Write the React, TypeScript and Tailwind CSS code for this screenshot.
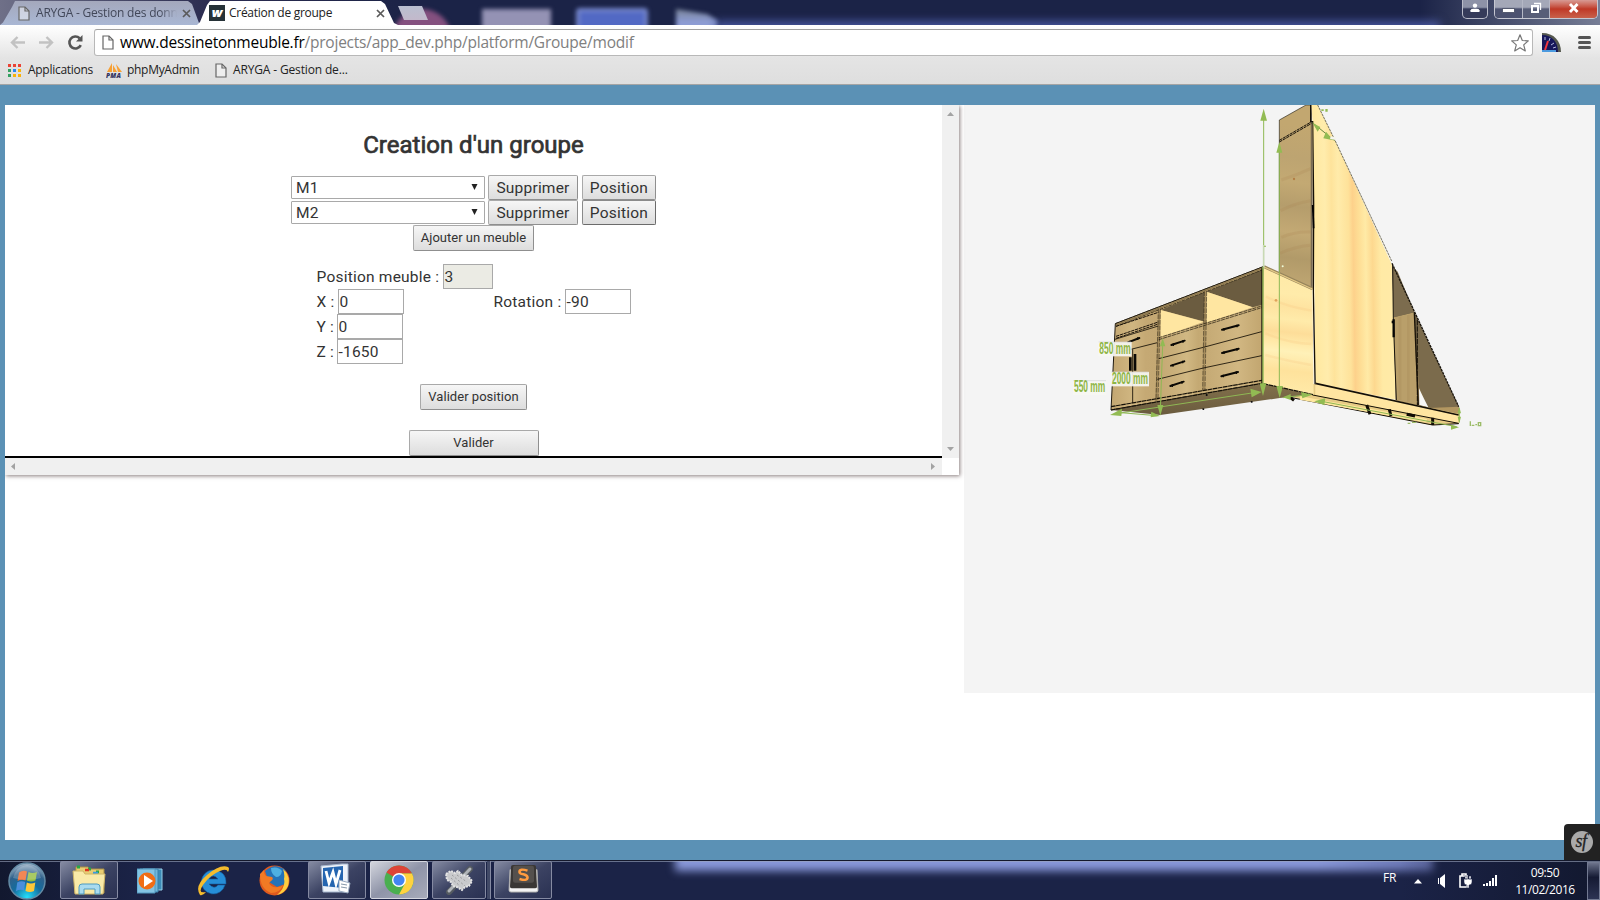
import type { ReactNode } from 'react';

const uiFont = "font-['Open_Sans','Noto_Sans',sans-serif]";

function PageIcon({ className = '' }: { className?: string }) {
  return (
    <svg className={className} width="12" height="15" viewBox="0 0 12 15" fill="none" stroke="#666" strokeWidth="1.2">
      <path d="M1 1h6l4 4v9H1z" fill="#fff" fillOpacity=".45" />
      <path d="M7 1v4h4" />
    </svg>
  );
}

function CloseIcon({ className = '' }: { className?: string }) {
  return (
    <svg className={className} width="9" height="9" viewBox="0 0 9 9" stroke="#5a5a5a" strokeWidth="1.7">
      <path d="M1 1l7 7M8 1L1 8" />
    </svg>
  );
}

function TitleBar() {
  return (
    <div className="relative flex h-[25px] shrink-0 items-start overflow-hidden bg-[#1b2347]">
      <div className="absolute inset-y-0 left-0 w-[420px] bg-linear-to-r from-[#6f7088] via-[#2b2c50] to-[#1b2347]" />
      <div className="absolute left-[392px] top-[9px] size-[60px] rounded-full bg-[#84507f] blur-[2px]" />
      <div className="absolute left-[482px] top-[9px] h-[30px] w-[69px] bg-[#9492b4] blur-[2px]" />
      <div className="absolute left-[576px] top-[8px] h-[30px] w-[72px] rounded border-[4px] border-[#7384c9] bg-[#5269c4] blur-[2px]" />
      <div className="absolute left-[672px] top-[4px] h-[30px] w-[52px] blur-[2px]">
        <div className="ml-[4px] mt-[5px] h-[26px] w-[42px] bg-linear-to-b from-[#7a8497] to-[#8d9cd4] to-50% [clip-path:polygon(0_0,75%_20%,100%_45%,100%_100%,0_100%)]" />
      </div>
      <div className="absolute left-[716px] top-[21px] h-[14px] w-[724px] bg-[#45549a] blur-[4px]" />
      <div className="absolute right-0 top-0 h-full w-[180px] bg-linear-to-r from-transparent to-[#777e96]" />
      <div className="relative mt-px flex h-6 w-[200px] items-center bg-linear-to-b from-[#a4a8bc] to-[#a9b7d4] pl-[18px] [clip-path:polygon(0_100%,3px_90%,12px_6px,15px_0,188px_0,192px_3px,199px_22px,100%_100%)]">
        <PageIcon />
        <span className={`${uiFont} ml-[6px] w-[141px] whitespace-nowrap text-[12px] leading-6 tracking-[-0.2px] text-[#42485a] [mask-image:linear-gradient(to_right,#000_88%,transparent)]`}>
          ARYGA - Gestion des donn
        </span>
        <CloseIcon className="ml-[5px] shrink-0" />
      </div>
      <div className="relative -ml-[3px] mt-px flex h-6 w-[201px] items-center bg-white pl-3 [clip-path:polygon(0_100%,3px_88%,10px_4px,13px_0,184px_0,188px_3px,197px_22px,100%_100%)]">
        <span className="flex size-4 items-center justify-center bg-[#263238] pb-[2px] font-['Open_Sans',sans-serif] text-[13px] font-extrabold italic leading-none text-white">w</span>
        <span className={`${uiFont} ml-[4px] w-[147px] whitespace-nowrap text-[12px] leading-6 tracking-[-0.28px] text-[#222]`}>Création de groupe</span>
        <CloseIcon className="shrink-0" />
      </div>
      <div className="relative mt-[6px] h-[14px] w-[30px] bg-linear-to-b from-[#b9bfd0] to-[#c3b9cb] [clip-path:polygon(0_0,24px_0,30px_100%,6px_100%)]" />
      <div className="relative ml-auto flex gap-[6px] pr-[2px]">
        <div className="flex h-[19px] w-[26px] items-center justify-center rounded-b-[5px] border-x border-b border-[#b9bcc9] bg-linear-to-b from-[#8d92a7] from-40% to-[#353b5a] to-50% pb-[2px]">
          <svg width="10" height="10" viewBox="0 0 10 10" fill="#fff"><circle cx="5" cy="2.6" r="2.2" /><path d="M.5 9V7.2Q1 5.8 3.5 5.8h3Q9 5.8 9.5 7.2V9z" /></svg>
        </div>
        <div className="flex h-[19px] w-[104px] overflow-hidden rounded-b-[5px] border-x border-b border-[#c5c7d1]">
          <div className="flex w-[28px] items-center justify-center border-r border-[#b5b8c6] bg-linear-to-b from-[#a4a8b8] from-40% to-[#4c5270] to-50%">
            <div className="mt-[2px] h-[3px] w-[11px] bg-white outline outline-[#555b70]" />
          </div>
          <div className="flex w-[27px] items-center justify-center border-r border-[#b5b8c6] bg-linear-to-b from-[#a4a8b8] from-40% to-[#585e78] to-50% pb-[2px]">
            <svg width="12" height="12" viewBox="0 0 12 12" fill="none" stroke="#fff"><path d="M4 1.5h6.500v6.500" strokeWidth="1.300" /><path d="M2 4h6v6H2z" strokeWidth="2" /></svg>
          </div>
          <div className="flex flex-1 items-center justify-center bg-linear-to-b from-[#d79a94] via-[#bf3826] via-50% to-[#c8604a] pb-[2px]">
            <svg width="12" height="10" viewBox="0 0 12 10" stroke="#fff" strokeWidth="2.800"><path d="M2 1l7.500 8M9.500 1L2 9" /></svg>
          </div>
        </div>
      </div>
    </div>
  );
}

function Arrow({ flip = false }: { flip?: boolean }) {
  return (
    <svg className={flip ? 'rotate-180' : ''} width="15" height="13" viewBox="0 0 15 13" fill="none" stroke="#c2c2c2" strokeWidth="2.400">
      <path d="M15 6.500H2M7.500 1L2 6.500l5.500 5.500" />
    </svg>
  );
}

function Toolbar() {
  return (
    <div className="flex h-[33px] shrink-0 items-start bg-linear-to-b from-white to-[#e4e4e4] pt-1">
      <div className="flex h-[27px] w-[94px] items-center pl-[10px]">
        <Arrow />
        <div className="ml-[14px]"><Arrow flip /></div>
        <svg className="ml-[13px]" width="17" height="17" viewBox="0 0 17 17">
          <path d="M13.800 11.200A6 6 0 1 1 12.600 4.200" fill="none" stroke="#555" strokeWidth="2.600" />
          <path d="M15.500 1v6.500H9z" fill="#555" />
        </svg>
      </div>
      <div className="flex h-[27px] w-[1439px] items-center rounded-[3px] border border-[#b8b8b8] border-t-[#a0a0a0] bg-white pl-[7px] pr-[3px]">
        <PageIcon />
        <span className={`${uiFont} ml-[6px] flex-1 whitespace-nowrap pb-px text-[15.500px] leading-6 tracking-[-0.230px] text-[#808080]`}>
          <span className="text-black">www.dessinetonmeuble.fr</span>/projects/app_dev.php/platform/Groupe/modif
        </span>
        <svg width="18" height="18" viewBox="0 0 18 18" fill="#fff" stroke="#777" strokeWidth="1.200" strokeLinejoin="round">
          <path d="M9 .8l2.300 5.700 6 .4-4.600 4 1.600 6L9 13.700 3.700 16.900l1.600-6-4.600-4 6-.4z" />
        </svg>
      </div>
      <svg className="ml-[9px] mt-1" width="19" height="19" viewBox="0 0 19 19">
        <path d="M0 0C12 0 19 8 19 19H0z" fill="#55584e" />
        <path d="M0 2C10 2 16 9 16 19H0z" fill="#17175a" />
        <path d="M0 17h14v2H0z" fill="#4b9be0" />
        <path d="M3 4v3M8 5L7 8M12 10l-3 2M14 14l-3 1" stroke="#b5b9df" />
        <path d="M3 17L6 8" stroke="#f2353f" strokeWidth="2" />
      </svg>
      <div className="ml-[17px] mt-[7px] flex w-[13px] flex-col gap-[2px]">
        <div className="h-[3px] rounded bg-[#555]" />
        <div className="h-[3px] rounded bg-[#555]" />
        <div className="h-[3px] rounded bg-[#555]" />
      </div>
    </div>
  );
}

const appDots = ['bg-[#ea4335]', 'bg-[#ea4335]', 'bg-[#ea4335]', 'bg-[#34a060]', 'bg-[#2a88f0]', 'bg-[#f9b20a]', 'bg-[#34a060]', 'bg-[#f9b20a]', 'bg-[#f9b20a]'];

function Bookmarks() {
  return (
    <div className={`${uiFont} flex h-[27px] shrink-0 items-center whitespace-nowrap border-b border-[#a4a4a4] bg-linear-to-b from-[#e4e4e4] to-[#dedede] pb-[2px] pl-2 text-[12px] text-[#222]`}>
      <div className="grid grid-cols-3 gap-[2px]">
        {appDots.map((c, i) => <div key={i} className={`${c} size-[3px]`} />)}
      </div>
      <span className="ml-[7px] w-[78px] tracking-[-0.280px]">Applications</span>
      <svg width="17" height="15" viewBox="0 0 17 15">
        <path d="M6 0L1 9h5zM7 2v7h4zM10 1l6 8h-4z" fill="#f7a034" />
        <text x="0" y="14.500" fontFamily="Open Sans" fontSize="6.500" fontWeight="800" fontStyle="italic" fill="#343560" textLength="15">PMA</text>
      </svg>
      <span className="ml-[4px] w-[88px] tracking-[-0.30px]">phpMyAdmin</span>
      <PageIcon />
      <span className="ml-[6px] tracking-[-0.15px]">ARYGA - Gestion de...</span>
    </div>
  );
}

function Btn({ children, className }: { children: ReactNode; className: string }) {
  return (
    <button className={`${className} flex shrink-0 items-center justify-center whitespace-nowrap rounded-[2px] border bg-linear-to-b from-[#f6f6f6] to-[#dddddd] text-[#333]`}>
      {children}
    </button>
  );
}

const btnEdge = 'border-[#a9a9a9] border-b-[#8f8f8f] border-r-[#8f8f8f]';
const btnEdgeFocused = 'border-[#8a8a8a] border-b-[#6b6b6b] border-r-[#6b6b6b]';

function FurnitureRow({ name, selected = false }: { name: string; selected?: boolean }) {
  return (
    <div className="flex h-[25px] items-center">
      <div className="flex h-[23px] w-[194px] items-center justify-between rounded-[1px] border border-[#a9a9a9] pl-1 pr-[6px]">
        <span className="pt-[2px]">{name}</span>
        <svg className="mb-[2px]" width="7" height="6" viewBox="0 0 7 6" fill="#222"><path d="M.5 0h6L3.500 6z" /></svg>
      </div>
      <Btn className={`${btnEdge} ml-[3px] h-[25px] w-[90px] pt-[2px]`}>Supprimer</Btn>
      <Btn className={`${selected ? btnEdgeFocused : btnEdge} ml-[4px] h-[25px] w-[74px] pt-[2px]`}>Position</Btn>
    </div>
  );
}

function Field({ value, className }: { value: string; className: string }) {
  return <div className={`${className} flex h-[25px] shrink-0 items-center border border-[#a9a9a9] pl-px pt-[2px]`}>{value}</div>;
}

function FormPanel() {
  return (
    <div className="relative h-[370px] w-[954px] shrink-0 bg-white shadow-[1px_1px_4px_0px_rgba(60,40,40,0.6)] [clip-path:inset(0_-8px_-8px_0)]">
      <div className="flex h-[353px]">
        <div className="flex w-[937px] flex-col items-center border-b-2 border-black font-[Roboto,sans-serif] text-[15.500px] leading-none tracking-[0.220px] text-[#333]">
          <h1 className="mt-[26px] h-[44px] whitespace-nowrap text-[24px] leading-[28px] tracking-[0px] text-[#333] [-webkit-text-stroke:0.7px_#333]">Creation d'un groupe</h1>
          <FurnitureRow name="M1" />
          <FurnitureRow name="M2" selected />
          <Btn className={`${btnEdge} h-[26px] w-[121px] pb-[2px] text-[13px] tracking-[0px]`}>Ajouter un meuble</Btn>
          <div className="mt-[13px] flex w-[314px] flex-col whitespace-nowrap">
            <div className="flex items-center">
              <span className="w-[126px] pt-[2px]">Position meuble :</span>
              <Field value="3" className="w-[50px] bg-[#ebebe4]" />
            </div>
            <div className="flex items-center">
              <span className="w-[21px] pt-[2px]">X :</span>
              <Field value="0" className="w-[66px]" />
              <span className="ml-[90px] w-[71px] pt-[2px]">Rotation :</span>
              <Field value="-90" className="w-[66px]" />
            </div>
            <div className="flex items-center">
              <span className="w-[20px] pt-[2px]">Y :</span>
              <Field value="0" className="w-[66px]" />
            </div>
            <div className="flex items-center">
              <span className="w-[20px] pt-[2px]">Z :</span>
              <Field value="-1650" className="w-[66px]" />
            </div>
          </div>
          <Btn className={`${btnEdge} mt-[20px] h-[26px] w-[107px] pb-[2px] text-[13px] tracking-[0.030px]`}>Valider position</Btn>
          <Btn className={`${btnEdge} mt-[20px] h-[26px] w-[130px] pb-[2px] text-[13px] tracking-[0.1px]`}>Valider</Btn>
        </div>
        <div className="flex w-[17px] flex-col items-center justify-between bg-[#f0f0f0] py-[7px]">
          <svg width="7" height="4" viewBox="0 0 7 4" fill="#a3a3a3"><path d="M0 4L3.500 0 7 4z" /></svg>
          <svg width="7" height="4" viewBox="0 0 7 4" fill="#a3a3a3"><path d="M0 0h7L3.500 4z" /></svg>
        </div>
      </div>
      <div className="flex h-[17px] w-[937px] items-center justify-between bg-[#f0f0f0] pl-[6px] pr-[7px]">
        <svg width="4" height="7" viewBox="0 0 4 7" fill="#a3a3a3"><path d="M4 0v7L0 3.500z" /></svg>
        <svg width="4" height="7" viewBox="0 0 4 7" fill="#a3a3a3"><path d="M0 0v7l4-3.500z" /></svg>
      </div>
    </div>
  );
}

function Handle({ x, y, l = 54 }: { x: number; y: number; l?: number }) {
  return (
    <>
      <path d={`M${x} ${y}l${l} -13`} stroke="#0b0905" strokeWidth="6" strokeLinecap="round" />
      <path d={`M${x + 6} ${y + 3}v-8M${x + l - 5} ${y - 7}v-8`} stroke="#0b0905" strokeWidth="4" />
    </>
  );
}

function Dimension({ x, y, w, children }: { x: number; y: number; w: number; children: string }) {
  return (
    <g>
      <rect x={x - 3} y={y - 35} width={w + 6} height="43" fill="#f6f6f2" fillOpacity=".92" />
      <path d={`M${x - 2} ${y - 35}h${w + 4}`} stroke="#d2d2d2" strokeWidth="2" />
      <text transform={`translate(${x} ${y}) scale(.525 1)`} fontFamily="Liberation Sans" fontSize="48" fontWeight="700" fill="#8db544">{children}</text>
    </g>
  );
}

function FurnitureDrawing() {
  return (
    <svg className="ml-[96px] block" width="430" height="335" viewBox="0 15 1290 1005" fill="none">
      <defs>
        <linearGradient id="door" x1="760" x2="1010" y1="0" y2="-4" gradientUnits="userSpaceOnUse">
          <stop offset="0" stopColor="#ffe9a2" /><stop offset=".12" stopColor="#ffecac" /><stop offset=".2" stopColor="#fee39b" />
          <stop offset=".28" stopColor="#ffebaa" /><stop offset=".4" stopColor="#fee29a" /><stop offset=".45" stopColor="#fdd18b" />
          <stop offset=".52" stopColor="#fede95" /><stop offset=".6" stopColor="#ffeaa6" /><stop offset=".68" stopColor="#fdd88f" />
          <stop offset=".78" stopColor="#ffeaa5" /><stop offset="1" stopColor="#ffeaa8" />
        </linearGradient>
        <linearGradient id="side" x1="640" x2="600" y1="500" y2="880" gradientUnits="userSpaceOnUse">
          <stop offset="0" stopColor="#ffe9a6" /><stop offset=".2" stopColor="#ffebaa" /><stop offset=".3" stopColor="#fee3a0" /><stop offset=".4" stopColor="#ffebaa" />
          <stop offset=".5" stopColor="#fddd99" /><stop offset=".58" stopColor="#ffe9a8" /><stop offset=".65" stopColor="#fff1b8" /><stop offset=".8" stopColor="#fee29c" /><stop offset="1" stopColor="#ffebaa" />
        </linearGradient>
        <linearGradient id="tower" x1="740" x2="680" y1="80" y2="560" gradientUnits="userSpaceOnUse">
          <stop offset="0" stopColor="#c2a770" /><stop offset=".2" stopColor="#bda471" /><stop offset=".35" stopColor="#c3a973" />
          <stop offset=".5" stopColor="#b59d6c" /><stop offset=".66" stopColor="#c3a974" /><stop offset=".82" stopColor="#b19a69" /><stop offset="1" stopColor="#c0a773" />
        </linearGradient>
        <linearGradient id="front" x1="160" x2="600" y1="0" y2="0" gradientUnits="userSpaceOnUse">
          <stop offset="0" stopColor="#c4a873" /><stop offset=".13" stopColor="#d0b681" /><stop offset=".22" stopColor="#c5a974" /><stop offset=".3" stopColor="#c4a873" />
          <stop offset=".42" stopColor="#cab07b" /><stop offset=".5" stopColor="#d1b883" /><stop offset=".58" stopColor="#c4a973" /><stop offset=".65" stopColor="#c6ab76" /><stop offset=".85" stopColor="#d1b782" /><stop offset="1" stopColor="#c3a771" />
        </linearGradient>
        <linearGradient id="shade" x1="0" x2="0" y1="0" y2="1">
          <stop offset="0" stopColor="#83714c" /><stop offset="1" stopColor="#6a5b3e" />
        </linearGradient>
        <linearGradient id="slope" x1="0" x2="0" y1="0" y2="1">
          <stop offset="0" stopColor="#75664a" /><stop offset=".6" stopColor="#6a5c41" /><stop offset=".75" stopColor="#9a8258" /><stop offset="1" stopColor="#6d5d40" />
        </linearGradient>
      </defs>

      {/* tall unit */}
      <path d="M658 60L738 15h16v552l-96-48z" fill="url(#tower)" stroke="#2b261a" strokeWidth="2" />
      <path d="M658 121l97-56M658 126l97-56" stroke="#1a150c" strokeWidth="3" strokeDasharray="10 2" />
      <path d="M664 240q45-14 88-34M662 332q40-22 90-30M664 412q40-18 88-16M660 460q45-20 90-24" stroke="#a77f4c" strokeOpacity=".18" strokeWidth="9" />
      <circle cx="702" cy="237" r="3.500" fill="#b27d43" />
      <path d="M754 15h19l51 104 174 380 9 400-241-50L758 68z" fill="url(#door)" />
      <path d="M773 15l51 104 172 366" stroke="#77735f" strokeWidth="3" strokeDasharray="8 2" />
      <path d="M752 15v50h6l3 250-1 260 6 310" stroke="#151006" strokeWidth="4" />
      <path d="M756 70v500" stroke="#7b6848" strokeWidth="4" />
      <path d="M758 315l3 70" stroke="#000" strokeWidth="5" />
      <path d="M757 68l67 54" stroke="#69863f" strokeWidth="3" />

      {/* sloped end of the tall unit */}
      <path d="M997 495L1196 920v50l-189-70z" fill="url(#slope)" />
      <path d="M1001 652l62-15 10 305-65-40z" fill="#b99f6a" />
      <path d="M1020 650v250M1045 645v260" stroke="#a78956" strokeWidth="8" strokeOpacity=".3" />
      <path d="M997 500l4 152 62-15-50-122z" fill="#7c6c4e" />
      <path d="M1072 660l122 260-90 4-28-65z" fill="#7b6b4c" />
      <path d="M1077 865q8 18 28 57l-27-7z" fill="#f8f8f6" />
      <path d="M1063 637l13 308" stroke="#181208" strokeWidth="4" />
      <path d="M1072 660v280" stroke="#181208" strokeWidth="3" strokeDasharray="16 3" />
      <path d="M1105 924l91-4v28z" fill="#b39761" />
      <path d="M996 490l200 430" stroke="#18130b" strokeWidth="4" strokeDasharray="8 2" />
      <path d="M998 495l2 165 9 240" stroke="#18130b" strokeWidth="3" />
      <path d="M1001 658v54M995 666h6" stroke="#060503" strokeWidth="7" />

      {/* plinth of the tall unit */}
      <path d="M690 890l70-38 437 90v29l-80 5z" fill="#e7cb85" />
      <path d="M766 850l430 92v28L766 886z" fill="#ffe5a1" />
      <path d="M766 850l430 95" stroke="#130e06" strokeWidth="5" />
      <path d="M758 885l438 85M690 892l428 83 78-4" stroke="#130e06" strokeWidth="3" />
      <path d="M720 894l380 68" stroke="#ffe79e" strokeWidth="10" />
      <path d="M920 915l10 28M988 928l5 20M1118 953v22M690 892l12 9M1040 943l25 5" stroke="#100b04" strokeWidth="9" />

      {/* low unit */}
      <path d="M166 671L610 500v350L153 930z" fill="url(#front)" stroke="#201a10" strokeWidth="3" />
      <path d="M153 930L606 850l153 34-100 10-358 51z" fill="url(#shade)" />
      <path d="M302 630l134-55v90zM440 575l166-66v105l-28 8z" fill="#6b5c40" />
      <path d="M302 630l130 35-130 47zM440 575l138 47-138 46z" fill="#ffe6a1" />
      <path d="M610 500l147 66 4 318-153-34z" fill="url(#side)" />
      <path d="M612 500l145 66" stroke="#97845b" strokeWidth="9" />
      <path d="M612 501l145 66" stroke="#e4c986" strokeWidth="4" />
      <path d="M618 590q60 30 136 42M616 700q70 30 138 32M616 765q70 18 138 30" stroke="#f9c684" strokeOpacity=".25" strokeWidth="7" />
      <circle cx="648" cy="601" r="4" fill="#e0a45c" />
      <path d="M166 671L610 500M168 679L606 510" stroke="#2b2415" strokeWidth="2.500" strokeDasharray="12 2" />
      <path d="M168 675L608 505" stroke="#8f7a50" strokeWidth="5" />
      <path d="M298 625l-9 278M436 573l-5 300" stroke="#a58c5c" strokeWidth="6" />
      <path d="M301 626l-7 275M440 574l-5 298M295 626l-7 275M433 574l-5 298" stroke="#1b150b" strokeWidth="1.500" strokeDasharray="14 3" />
      <path d="M168 709l127-43M168 715l127-43M168 679l127-42" stroke="#181109" strokeWidth="3" strokeDasharray="10 2" />
      <path d="M296 713L605 618M296 719l309-96" stroke="#1b150b" strokeWidth="2" strokeDasharray="12 2" />
      <path d="M165 718l130-40" stroke="#1b150b" strokeWidth="2.500" />
      <path d="M165 760l127-32M218 748v161M296 776l134-34 175-47M292 838l138-34 175-37" stroke="#161006" strokeWidth="2.600" />
      <path d="M153 920l453-79M153 930l453-80 153 34" stroke="#141008" strokeWidth="3.500" strokeDasharray="14 1.500" />
      <path d="M606 505v348" stroke="#141008" strokeWidth="4" />
      <Handle x={486} y={689} l={50} />
      <Handle x={486} y={759} l={50} />
      <Handle x={484} y={829} l={50} />
      <Handle x={334} y={735} l={40} />
      <Handle x={333} y={797} l={40} />
      <Handle x={331} y={858} l={40} />
      <Handle x={204} y={727} l={34} />
      <path d="M225 762v50M211 772v40" stroke="#0b0905" strokeWidth="8" />
      <path d="M440 882v6M575 903v5M430 925v5" stroke="#111" strokeWidth="5" />

      {/* dimension arrows */}
      <g stroke="#8fb854" strokeWidth="3">
        <path d="M611 55v380" />
        <path d="M611 435v70" stroke="#c8d9b4" strokeWidth="5" />
        <path d="M609 500v360" strokeWidth="4" />
        <path d="M658 140v730M308 735l-7 195M175 940l420-64M170 937l120 10M670 893l80-10M790 905l400 75M1198 925v42" />
      </g>
      <g fill="#92bb53">
        <path d="M611 26l10 36h-20zM658 126l9 32h-18zM609 888l-10-38h20zM659 894l-10-36h20zM308 715l8 24h-16zM301 947l-9-32h18z" />
        <path d="M150 945l36-19-2 22zM300 948l-28 4 2-17zM605 876l-34-10 4 26zM668 892l24-10v18zM757 884l-34-8 4 19zM763 904l33-9-3 21zM1197 982l-24-8v15zM758 69l23 12-8 14zM820 121l-30-6 8-20zM1198 920l5 20h-10zM1198 970l5-20h-10z" />
        <path d="M784 28h7v5h-7zM796 27h7v8h-7zM612 437h6v3h-6z" />
      </g>
      <path d="M811 113l17 3" stroke="#f4f4ed" strokeWidth="8" />
      <circle cx="668" cy="499" r="3" fill="#effbd9" />
      <Dimension x={118} y={761} w={94}>850 mm</Dimension>
      <Dimension x={156} y={851} w={108}>2000 mm</Dimension>
      <Dimension x={42} y={877} w={94}>550 mm</Dimension>
      <path d="M1043 970h8m5-3h12" stroke="#9cbc68" strokeWidth="4" />
      <path d="M1231 964v14M1235 976h8M1246 974h5M1255 966v13M1262 966v13M1254 968h10M1254 977h10" stroke="#9cbc68" strokeWidth="4" />
    </svg>
  );
}

function Page() {
  return (
    <div className="relative flex h-[775px] shrink-0 bg-[#5b91b5] px-[5px] pb-5 pt-5">
      <div className="flex flex-1 items-start justify-between bg-white">
        <FormPanel />
        <div className="h-[588px] w-[631px] bg-[#f4f4f4]">
          <FurnitureDrawing />
        </div>
      </div>
      <div className="absolute bottom-0 right-0 flex h-9 w-9 items-center justify-center rounded-tl bg-[#222]">
        <div className="flex size-[22px] items-center justify-center rounded-full bg-[#aaa] pb-[3px] pr-[2px] font-['Liberation_Serif',serif] text-[18px] italic leading-none tracking-[-0.500px] text-[#222] [-webkit-text-stroke:0.3px_#222]">sf</div>
      </div>
    </div>
  );
}

function TaskButton({ children, className = 'w-[58px]', active = false }: { children?: ReactNode; className?: string; active?: boolean }) {
  return (
    <div className={`${className} ${active ? 'border-[#d5d7e0] from-[#d3d5dd] via-[#8f94a8] to-[#a7abba]' : 'border-[#858aa2] from-[#858ba2] via-[#3c4363] to-[#2a3152]'} flex h-[38px] shrink-0 items-center justify-center rounded-[2px] border bg-linear-to-br`}>
      {children}
    </div>
  );
}

function Taskbar() {
  return (
    <div className={`${uiFont} relative flex h-10 shrink-0 items-start overflow-hidden border-t border-[#14182b] bg-[#1b2347]`}>
      <div className="absolute inset-y-0 left-0 w-[140px] bg-linear-to-r from-[#12182f] to-transparent" />
      <div className="absolute -top-[10px] left-[675px] h-[20px] w-[758px] bg-linear-to-r from-[#8998da] from-85% to-[#6570ad] blur-[4px]" />
      <div className="absolute right-0 top-0 h-full w-[200px] bg-linear-to-r from-transparent to-[#12182f]" />
      <div className="absolute left-0 top-0 h-px w-full bg-[#9ba5bd]/60" />
      <svg className="relative ml-2 mt-px" width="38" height="38" viewBox="0 0 38 38">
        <defs>
          <radialGradient id="orb" cx=".5" cy=".95" r=".9"><stop offset="0" stopColor="#25e0fb" /><stop offset=".45" stopColor="#146c9e" /><stop offset=".75" stopColor="#30618b" /><stop offset="1" stopColor="#93acc3" /></radialGradient>
        </defs>
        <circle cx="19" cy="19" r="18" fill="url(#orb)" stroke="#648ba5" strokeWidth="1.500" />
        <path d="M11 10.500q4-3 8-1l-1.500 9q-4-1.700-8 .5z" fill="#ee6a2b" />
        <path d="M20.500 10q4 2 8.500 0l-1.500 8.500q-4 2-8.500.3z" fill="#93bd3e" />
        <path d="M9.200 20.500q4-2.200 8-.5L16 28.500q-4-1.700-8 .8z" fill="#4a8edb" />
        <path d="M18.800 20.500q4 2 8.500 0L26 29q-4 2-8.500 0z" fill="#fdc738" />
        <path d="M5 16Q19 20 33 16Q30 4 19 3Q8 4 5 16z" fill="#fff" fillOpacity=".2" />
      </svg>
      <div className="relative ml-[14px] flex h-[39px]">
        <TaskButton>
          <svg width="34" height="32" viewBox="0 0 34 32">
            <path d="M4 3h12l2 2h14v24H3z" fill="#e9cd72" stroke="#a88e44" />
            <path d="M5 3h3M16 5h3M24 8h3" stroke="#28a646" strokeWidth="3" />
            <path d="M13 6h4" stroke="#dc3420" strokeWidth="2.500" /><path d="M21 9h5" stroke="#3b9ce0" strokeWidth="2.500" />
            <path d="M1 7h10l2 3h20l-2 20H3z" fill="#f9eaa8" stroke="#ceb568" />
            <path d="M7 30v-7q0-3 3-3h15q3 0 3 3v7h-5v-5H12v5z" fill="#a9dbef" stroke="#4f9bc0" />
          </svg>
        </TaskButton>
      </div>
      <svg className="relative ml-[19px] mt-[7px]" width="26" height="26" viewBox="0 0 26 26">
        <path d="M6 1h19v21H6z" fill="#3c8bb6" stroke="#97d0eb" /><path d="M3 1h18v23H3z" fill="#71b7d9" stroke="#3b7fa8" /><path d="M0 1h18v24H0z" fill="#83c4e3" stroke="#5399bf" />
        <circle cx="10" cy="13" r="8.500" fill="#f06d15" /><path d="M7 7l9 6-9 6z" fill="#fff" />
      </svg>
      <svg className="relative ml-[34px] mt-[4px]" width="33" height="32" viewBox="0 0 33 32">
        <path d="M16 5A12 12 0 1 0 28 20h-7q-4 5-9-1h17Q30 6 16 5zM12 14q4-6 9 0z" fill="#268ed7" stroke="#135d9d" strokeWidth=".6" fillRule="evenodd" />
        <path d="M3 30Q-3 21 10 10Q23-1 31 2q2 1 0 5-1-4-8-1Q13 10 6 20 0 29 9 27q-3 4-6 3z" fill="#f5bc2d" />
      </svg>
      <svg className="relative ml-[29px] mt-[4px]" width="31" height="31" viewBox="0 0 31 31">
        <circle cx="15.500" cy="15.500" r="15" fill="#e05a1e" />
        <path d="M6 6Q16-3 26 5q3 6 0 14l-8 3-8-5z" fill="#2473b8" /><path d="M12 3q7-2 11 3-1 6-6 6-5-3-5-9z" fill="#4eb0e2" />
        <path d="M24 4q8 7 5 17Q26 28 18 30q9-8 7-16 1-5-1-10z" fill="#ffcf3f" />
        <path d="M1 9l4-4q0 4 2 6l6 1q2 2-1 4l-2 2q2 5 9 4 3 0 5-2-3 8-12 8Q1 24 1 9z" fill="#f17a24" />
      </svg>
      <div className="relative ml-[18px] flex h-[39px] gap-[4px]">
        <TaskButton>
          <svg className="-ml-[3px] mb-[3px]" width="31" height="32" viewBox="0 0 31 32">
            <path d="M1 3l21-2h6v28H3z" fill="#eef3fb" stroke="#a8b8cf" /><path d="M3 5l20-2v22L3 23z" fill="#2565b0" />
            <path d="M6 8l3 12 4-11 3 12 4-14" fill="none" stroke="#fff" strokeWidth="2.800" /><path d="M19 17l11 3-2 10-9-2z" fill="#fff" stroke="#9aabc0" /><path d="M21 21l6 1m-6 2l6 1" stroke="#89a" />
          </svg>
        </TaskButton>
        <TaskButton active>
          <svg width="30" height="30" viewBox="0 0 30 30">
            <circle cx="15" cy="15" r="14.500" fill="#4aaf50" /><path d="M15 15L2.500 7.500A14.500 14.500 0 0 1 28 8.500H15z" fill="#dc4437" /><path d="M15 8.500h13A14.500 14.500 0 0 1 15 29.500l6-11z" fill="#ffd23f" />
            <circle cx="15" cy="15" r="7" fill="#fff" /><circle cx="15" cy="15" r="5.600" fill="#4385f3" />
          </svg>
        </TaskButton>
        <TaskButton className="w-[54px]">
          <svg width="30" height="30" viewBox="0 0 30 30">
            <path d="M5 27L26 4" stroke="#555b61" strokeWidth="6" strokeLinecap="round" /><path d="M5 26L26 4" stroke="#b0b4b8" strokeWidth="3" strokeLinecap="round" />
            <path d="M2 9l5-3 4 2 3-2 4 4 6 1 4 5-3 5-4 1-3 3-5-3-4-1-2-4-4-2z" fill="#c9cacc" stroke="#e4e4e4" strokeWidth="2" strokeDasharray="2 1" />
            <path d="M8 10l13 11M13 10l10 7M7 13l9 8" stroke="#9a9b9d" strokeDasharray="2 2" />
          </svg>
        </TaskButton>
        <div className="-ml-[3px] h-[38px] w-[4px] border-r border-[#858aa2] bg-[#414966]" />
        <TaskButton className="-ml-px w-[58px]">
          <svg className="mb-[3px]" width="31" height="29" viewBox="0 0 31 31" preserveAspectRatio="none">
            <path d="M2 6L1 28q0 2 2 2h25q2 0 2-2L29 6z" fill="#f4f4f4" stroke="#aaa" /><path d="M5 1h21q2 0 2 2l1 21q0 2-2 2H4q-2 0-2-2L3 3q0-2 2-2z" fill="#3a3735" /><rect x="5" y="2" width="21" height="18" rx="2" fill="#54504d" />
            <path d="M19.500 7q-8-2.500-8 1.500 0 2 4 2.500 4 1 4 3.500 0 4-8 1.500" fill="none" stroke="#ff9b3f" strokeWidth="2.600" />
          </svg>
        </TaskButton>
      </div>
      <div className="relative ml-auto flex h-full text-white">
        <span className="mt-[9px] w-[31px] text-[12px] leading-4 tracking-[-0.1px]">FR</span>
        <svg className="mt-[18px]" width="8" height="5" viewBox="0 0 8 5" fill="#fff"><path d="M0 4.500L4 0l4 4.500z" /></svg>
        <svg className="ml-[16px] mt-[13px]" width="7" height="14" viewBox="0 0 7 14" fill="#fff"><path d="M0 4h1v6H0zM2 4l5-4v14l-5-4z" /></svg>
        <svg className="ml-[13px] mt-[12px]" width="14" height="16" viewBox="0 0 14 16">
          <path d="M2 3h7v11H2zM4 1h4v2H4z" fill="none" stroke="#fff" strokeWidth="1.600" /><path d="M6 6h8v3q0 3-3 3v3H9v-3q-3 0-3-3zM7 3h2v3H7zm4 0h2v3h-2z" fill="#fff" stroke="#1b2347" strokeWidth=".5" />
        </svg>
        <svg className="ml-[11px] mt-[14px]" width="15" height="12" viewBox="0 0 15 12" fill="#fff"><path d="M0 9h2v2H0zM3 8h2v3H3zM6 6h2v5H6zM9 3h2v8H9zM12 0h2v11h-2z" /></svg>
        <div className="ml-[13px] flex w-[68px] flex-col items-center pt-[3px] text-[12px] leading-[17px] tracking-[-0.4px]">
          <span>09:50</span>
          <span>11/02/2016</span>
        </div>
        <div className="ml-[8px] mt-px h-[38px] w-[13px] border border-[#737a92] bg-linear-to-b from-[#6d738b] via-[#151a33] via-40% to-[#2d3453]" />
      </div>
    </div>
  );
}

export default function App() {
  return (
    <div className="flex h-[900px] w-[1600px] flex-col overflow-hidden">
      <TitleBar />
      <Toolbar />
      <Bookmarks />
      <Page />
      <Taskbar />
    </div>
  );
}
